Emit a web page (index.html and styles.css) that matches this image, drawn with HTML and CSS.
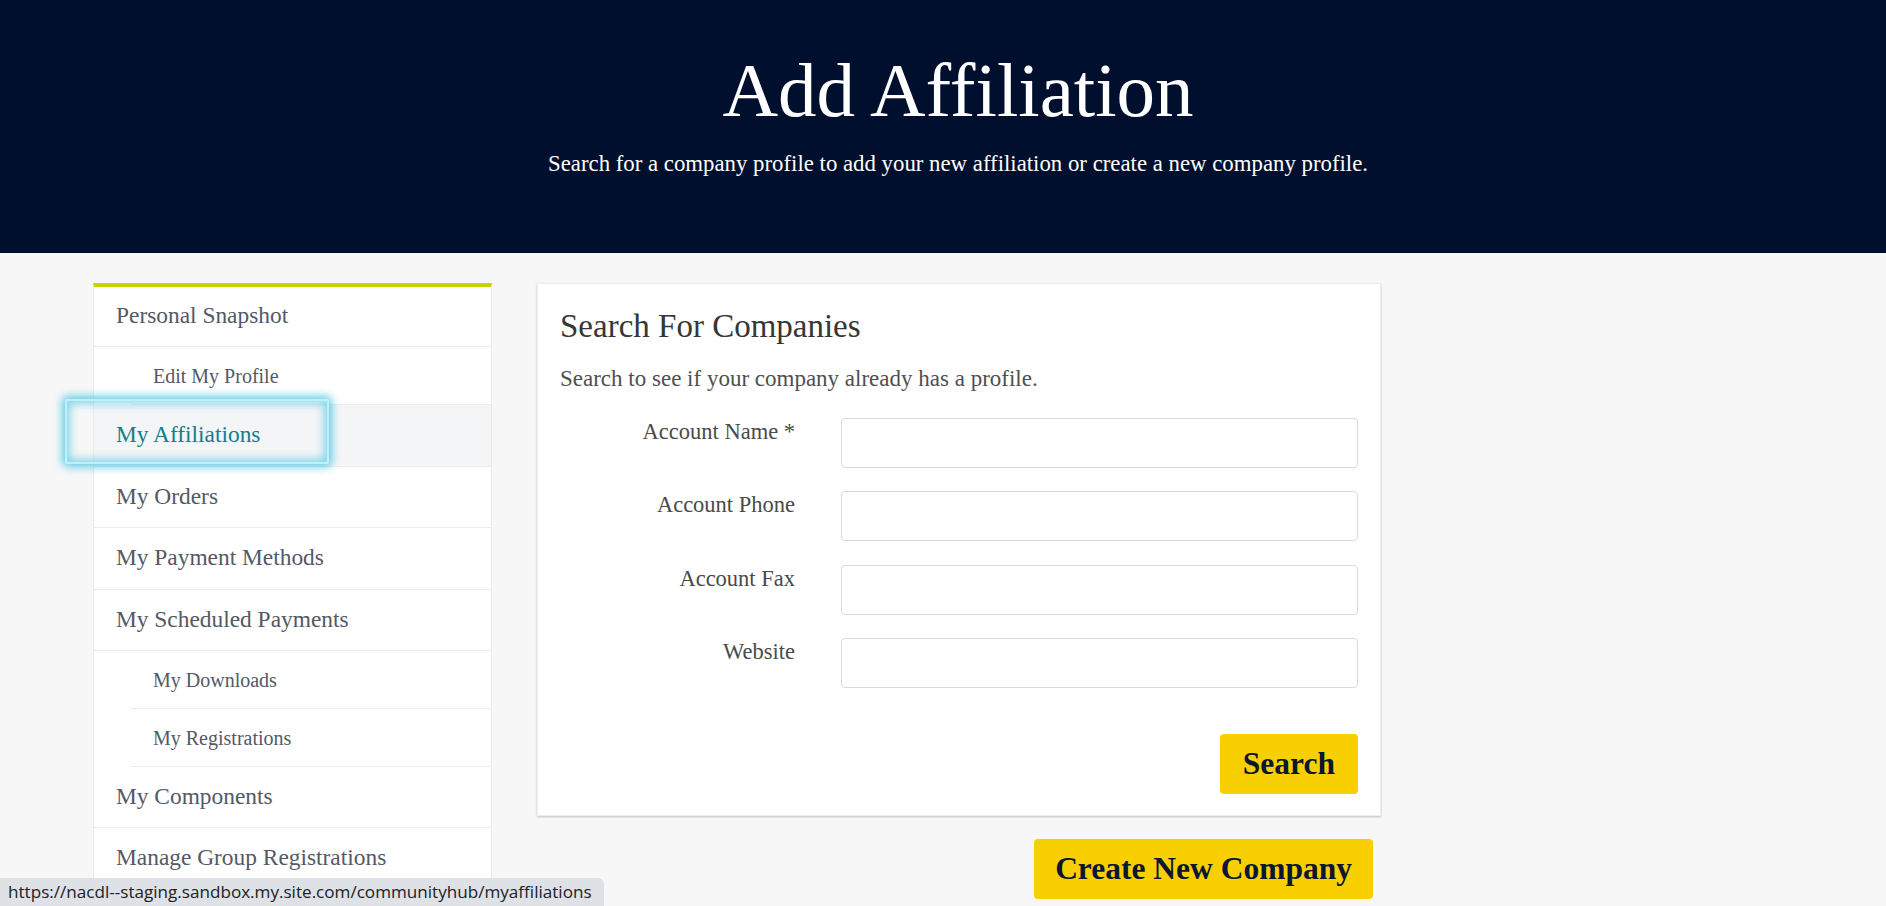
FILE: index.html
```html
<!DOCTYPE html>
<html lang="en">

<head>
    <meta charset="UTF-8">
    <meta name="viewport" content="width=device-width, initial-scale=1.0">
    <title>Add Affiliation</title>
    <link rel="stylesheet" href="styles.css">
</head>

<body>
    <header class="hero">
        <h1>Add Affiliation</h1>
        <p>Search for a company profile to add your new affiliation or create a new company profile.</p>
    </header>

    <div class="page">
        <nav class="side-nav">
            <a class="nav-item first" href="#">Personal Snapshot</a>
            <a class="nav-item sub" href="#">Edit My Profile</a>
            <a class="nav-item active" href="#">My Affiliations<span class="focus-ring"></span></a>
            <a class="nav-item" href="#">My Orders</a>
            <a class="nav-item" href="#">My Payment Methods</a>
            <a class="nav-item" href="#">My Scheduled Payments</a>
            <a class="nav-item sub" href="#">My Downloads</a>
            <a class="nav-item sub" href="#">My Registrations</a>
            <a class="nav-item" href="#">My Components</a>
            <a class="nav-item" href="#">Manage Group Registrations</a>
        </nav>

        <main class="content">
            <section class="card">
                <h2>Search For Companies</h2>
                <p class="intro">Search to see if your company already has a profile.</p>

                <div class="form-grid">
                    <label for="accName">Account Name *</label>
                    <input type="text" id="accName">

                    <label for="accPhone">Account Phone</label>
                    <input type="text" id="accPhone">

                    <label for="accFax">Account Fax</label>
                    <input type="text" id="accFax">

                    <label for="accWeb">Website</label>
                    <input type="text" id="accWeb">
                </div>

                <div class="actions">
                    <button class="btn">Search</button>
                </div>
            </section>

            <div class="actions outside">
                <button class="btn">Create New Company</button>
            </div>
        </main>
    </div>

    <div class="status-bar">https://nacdl--staging.sandbox.my.site.com/communityhub/myaffiliations</div>
</body>

</html>
```

FILE: styles.css
```css
body {
    margin: 0;
    font-family: 'Liberation Serif', serif;
    background-color: #f7f7f7;
    color: #4a4a4a;
}

.hero {
    background-color: #000f2d;
    color: #ffffff;
    text-align: center;
    height: 253px;
    padding: 48px 0 0 30px;
    box-sizing: border-box;
}

.hero h1 {
    margin: 0;
    font-size: 77px;
    font-weight: normal;
    line-height: 85px;
}

.hero p {
    margin: 17px 0 0;
    font-size: 22.8px;
    line-height: 28px;
}

.page {
    width: 1700px;
    margin: 30px auto 0;
    display: grid;
    grid-template-columns: 399px 844px;
    column-gap: 45px;
    align-items: start;
}

/* sidebar */
.side-nav {
    background-color: #ffffff;
    border: 1px solid #ebebeb;
    border-top: 4px solid #c8d400;
    display: flex;
    flex-direction: column;
}

.nav-item {
    position: relative;
    display: block;
    padding: 15px 22px 17.25px;
    font-size: 23.4px;
    line-height: 28px;
    color: #535966;
    text-decoration: none;
    border-bottom: 1px solid #ececec;
}

.nav-item.first {
    padding-top: 14px;
    padding-bottom: 17px;
}

.nav-item.sub {
    font-size: 20px;
    line-height: 24px;
    padding: 17px 22px 16px;
    margin-left: 37px;
}

.nav-item.active {
    background-color: #f4f5f7;
    color: #0f7f8c;
    padding-top: 15px;
    padding-bottom: 18px;
}

.focus-ring {
    position: absolute;
    left: -29px;
    top: -6px;
    width: 260px;
    height: 61px;
    border: 2px solid #bff0fa;
    border-radius: 3px;
    box-shadow: 0 0 8px 3px rgba(36, 186, 224, 0.7), inset 0 0 8px 3px rgba(36, 186, 224, 0.55);
}

/* main card */
.card {
    background-color: #ffffff;
    border: 1px solid #ededed;
    box-shadow: 0 1px 2px rgba(0, 0, 0, 0.22);
    padding: 22px 22px 21px;
}

.card h2 {
    margin: 0;
    font-size: 33px;
    font-weight: normal;
    line-height: 40px;
    color: #363636;
}

.intro {
    margin: 19px 0 0;
    font-size: 23px;
    line-height: 28px;
    color: #4f4f4f;
}

.form-grid {
    margin-top: 25px;
    display: grid;
    grid-template-columns: 235px 1fr;
    column-gap: 46px;
    row-gap: 23.3px;
}

.form-grid label {
    text-align: right;
    font-size: 22.5px;
    line-height: 28px;
    color: #4a4a4a;
}

.form-grid input {
    height: 50px;
    box-sizing: border-box;
    border: 1px solid #dadada;
    border-radius: 4px;
    background-color: #ffffff;
}

.actions {
    display: flex;
    justify-content: flex-end;
    margin-top: 46px;
}

.actions.outside {
    margin-top: 23px;
    margin-right: 8px;
}

.btn {
    height: 60px;
    padding: 0 23px;
    background-color: #f8cf00;
    color: #0b1630;
    border: none;
    border-radius: 4px;
    font-family: 'Liberation Serif', serif;
    font-weight: bold;
    font-size: 31.5px;
    cursor: pointer;
}

.actions.outside .btn {
    padding: 0 21px;
}

/* browser link preview */
.status-bar {
    position: fixed;
    left: 0;
    bottom: 0;
    height: 28px;
    line-height: 28px;
    padding: 0 12px 0 8px;
    background-color: #dee1e6;
    color: #202124;
    font-family: 'Open Sans', sans-serif;
    font-size: 17.1px;
    border-top-right-radius: 6px;
}
```
